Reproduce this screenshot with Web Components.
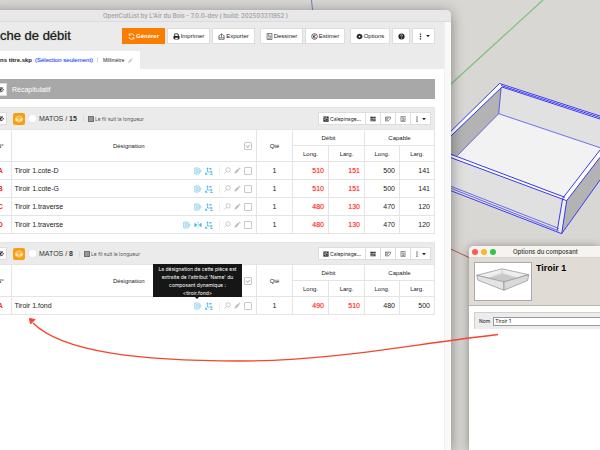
<!DOCTYPE html>
<html lang="fr">
<head>
<meta charset="utf-8">
<title>OpenCutList</title>
<style>
html, body { margin: 0; height: 100%; }
body { font-family: "Liberation Sans", Arial, sans-serif; color: #333; overflow: hidden; }
</style>
</head>
<body>
<ocl-desktop></ocl-desktop>
<script>
const ICONS = {
  refresh: '<g fill="none" stroke="currentColor" stroke-width="1.800"><path d="M2 9a6 6 0 0 0 11 2.500M14 7A6 6 0 0 0 3 4.500"/><path d="M2.500 1.500v3.700h3.700M13.500 14.500v-3.700H9.800"/></g>',
  print: '<path d="M4 1h7l2 2v4H3V1zM1 8q0-1 1-1h12q1 0 1 1v5h-2v2H3v-2H1z" fill="currentColor"/><path d="M5 3h5v1h1v3H5zM5 11h6v2.500H5z" fill="#fff"/>',
  exporter: '<g fill="none" stroke="currentColor" stroke-width="1.300"><path d="M5 6H2v8.500h12V6h-3M2 11h12M8 10V2M5 4.500L8 1.500l3 3"/></g>',
  doc: '<g fill="none" stroke="currentColor" stroke-width="1.300"><path d="M2.500 1h11v14h-11zM5 3.500h2M5 6h2M5 8.500h2M5 12h6M9 4v5h3"/></g>',
  money: '<g fill="none" stroke="currentColor" stroke-width="1.500"><circle cx="8" cy="8" r="6.500"/><path d="M11 5.500a3.300 3.300 0 1 0 0 5M4.500 7.300h4.500M4.500 9h4.500"/></g>',
  gear: '<path d="M8 1l1.500 2 2.500-.7.500 2.500L15 6l-1 2 1 2-2.500 1.200-.5 2.500-2.500-.7L8 15l-1.500-2-2.500.7-.5-2.500L1 10l1-2-1-2 2.500-1.200.5-2.500 2.500.7z" fill="currentColor"/><circle cx="8" cy="8" r="2" fill="#fff"/>',
  help: '<circle cx="8" cy="8" r="7" fill="currentColor"/><path d="M5.800 6.200a2.200 2.200 0 1 1 3.200 2q-1 .5-1 1.600M8 11v2" fill="none" stroke="#fff" stroke-width="1.700"/>',
  dots: '<path d="M6.500 1h3v3h-3zM6.500 6.500h3v3h-3zM6.500 12h3v3h-3z" fill="currentColor"/>',
  caret: '<path d="M3 5.500h10L8 11z" fill="currentColor"/>',
  pencil: '<path d="M1 15l1-4 7.500-7.500 3 3L5 14zM10.500 2.500L12 1l3 3-1.500 1.500z" fill="currentColor"/>',
  eye: '<path d="M1 9q3-5 7-5t7 5q-3 4-7 4T1 9z" fill="none" stroke="currentColor" stroke-width="2"/><circle cx="8" cy="8.500" r="2.500" fill="currentColor"/><path d="M3 14L13 2" stroke="currentColor" stroke-width="1.500"/>',
  board: '<path d="M8 2.500l6 2.500v5.500L8 14 2 10.500V5z" fill="#fbe3b0"/><path d="M2 5l6 3 6-3M8 8v6" fill="none" stroke="#f5a013" stroke-width="1.300"/><path d="M5 4.800l3-1.200 3 1.200-3 1.400z" fill="#f5a013"/>',
  grain: '<path d="M1 1h14v14H1z" fill="#aaa" stroke="#444" stroke-width="2"/><path d="M3 5h10M3 8h10M3 11h10" stroke="#666"/>',
  layout: '<path d="M1 1h14v14H1z" fill="currentColor"/><path d="M1 5h6v2M9 2v5h5M7 7v6M4 8v3M10 13l4-4" fill="none" stroke="#fff" stroke-width="1.400"/>',
  bars: '<path d="M1 2h14v4H1zM1 7.500h9V10H1zM1 11.500h14V14H1zM11 7.500h4V10h-4z" fill="currentColor"/><path d="M7 3.500h5M3 12.800h5" stroke="#fff"/>',
  label: '<g fill="none" stroke="currentColor" stroke-width="1.500"><path d="M9 13H1V3h14v4M3.500 6h6M3.500 9h4M9 13l6-6"/></g>',
  tag: '<g fill="none" stroke="#5bc0de" stroke-width="1.300"><path d="M1.500 2h8l5 6-5 6h-8zM3.500 5.500h4.500M3.500 8h6M3.500 10.500h4.500M9 4.500l2.500 3.500L9 11.500"/></g>',
  axes: '<path d="M5 2v8h8M5 10l-4 4" fill="none" stroke="#45b6e6" stroke-width="1.700" stroke-dasharray="3.500 1"/><path d="M2.500 4.500L5 .5l2.500 4zM11.500 7.500l4 2.500-4 2.500zM.5 10.500v5h5zM9 2h4v3H9zM11 13.500h4V16h-4z" fill="#45b6e6"/>',
  mirror: '<path d="M1 3l5.500 5L1 13zM15 3L9.500 8l5.500 5z" fill="#45b6e6"/><path d="M8 1v14" stroke="#45b6e6" stroke-width="1.300" stroke-dasharray="3 1"/>',
  search: '<g fill="none" stroke="currentColor" stroke-width="1.800"><circle cx="9.500" cy="6.500" r="5"/><path d="M6 10l-5 5"/></g>'
};

function define(name, css, html) {
  customElements.define(name, class extends HTMLElement {
    connectedCallback() {
      if (this.shadowRoot) return;
      const t = document.createElement('template');
      t.innerHTML = `<style>${css}</style>${typeof html === 'function' ? html(this) : html}`;
      this.attachShadow({ mode: 'open' }).append(t.content.cloneNode(true));
    }
  });
}

define('ocl-icon', `
  :host { display: inline-block; flex: none; width: 7px; height: 7px; }
  svg { display: block; width: 100%; height: 100%; }`,
  el => `<svg viewBox="0 0 16 16" aria-hidden="true">${ICONS[el.getAttribute('name')]}</svg>`);

define('ocl-button', `
  :host { display: block; flex: none; }
  button { box-sizing: border-box; width: 100%; height: 100%; margin: 0; padding: 0 4px 0 var(--lead, 4px); border: 1px solid #ddd; border-radius: 0;
    background: #fff; color: #222; font: inherit; display: flex; align-items: center; justify-content: center; gap: 1px; white-space: nowrap; }
  :host([primary]) button { background: #fb7d00; border-color: #fb7d00; color: #fff; font-weight: bold; }`,
  el => `<button type="button" aria-label="${el.getAttribute('label') || el.textContent.trim()}"><slot></slot></button>`);

define('ocl-toolbar', `
  :host { display: flex; align-items: center; justify-content: space-between; padding: 6px 9px 0 12px; }
  h1 { margin: 0; font-size: 13px; line-height: 16px; font-weight: normal; color: #222; text-shadow: 0 0 1px #666; white-space: nowrap; }
  .groups, .group { display: flex; }
  .groups { gap: 5px; font-size: 6px; }
  .group { gap: 2px; }
  ocl-button { height: 16px; width: 43px; }
  ocl-button.mid { width: 40px; }
  ocl-button.help { width: 18px; }
  ocl-button.more { width: 23px; }
  ocl-icon[name=caret] { width: 6px; height: 6px; }`,
  `<h1>che de débit</h1>
  <div class="groups">
    <div class="group">
      <ocl-button primary><ocl-icon name="refresh"></ocl-icon>Générer</ocl-button>
      <ocl-button><ocl-icon name="print"></ocl-icon>Imprimer</ocl-button>
      <ocl-button><ocl-icon name="exporter"></ocl-icon>Exporter</ocl-button>
    </div>
    <div class="group">
      <ocl-button><ocl-icon name="doc"></ocl-icon>Dessiner</ocl-button>
      <ocl-button class="mid"><ocl-icon name="money"></ocl-icon>Estimer</ocl-button>
    </div>
    <div class="group">
      <ocl-button class="mid"><ocl-icon name="gear"></ocl-icon>Options</ocl-button>
      <ocl-button class="help" label="Aide"><ocl-icon name="help"></ocl-icon></ocl-button>
      <ocl-button class="more" label="Plus"><ocl-icon name="dots"></ocl-icon><ocl-icon name="caret"></ocl-icon></ocl-button>
    </div>
  </div>`);

define('ocl-file-tab', `
  :host { display: flex; align-items: center; width: max-content; box-sizing: border-box; height: 18px; margin-top: 7px; padding: 0 7px 0 12px;
    background: #fff; font-size: 6px; color: #222; white-space: nowrap; }
  span { color: #2a4cf5; margin-left: 3px; text-shadow: 0 0 1px #9aaaff; }
  small { font-size: 5px; border-left: 1px solid #ddd; margin-left: 4px; padding-left: 5px; }
  button { border: 0; background: none; padding: 0; margin-left: 4px; color: #bbb; display: flex; }
  ocl-icon { width: 5px; height: 5px; }`,
  `<b>ns titre.skp</b><span>(Sélection seulement)</span><small>Millimètre</small>
  <button type="button" aria-label="Modifier"><ocl-icon name="pencil"></ocl-icon></button>`);

define('ocl-summary', `
  :host { display: flex; align-items: center; gap: 5px; height: 20px; background: #a8a8a8; color: #fff; font-size: 7px; }
  ocl-button { width: 19px; height: 13px; --lead: 9px; }`,
  `<ocl-button label="Afficher le récapitulatif"><ocl-icon name="eye"></ocl-icon></ocl-button>Récapitulatif`);

define('ocl-tooltip', `
  :host { position: absolute; z-index: 2; left: 50%; bottom: 100%; width: 89px; margin: 0 0 5px -45px; box-sizing: border-box; padding: 1px 0 0;
    background: #161616; color: #fff; font: 5px/8px Inter, sans-serif; text-align: center; white-space: nowrap; }
  i { position: absolute; left: 50%; top: 100%; margin-left: -2px; border: 2px solid transparent; border-top-color: #161616; border-bottom: 0; }`,
  `<slot></slot><i></i>`);

define('ocl-part-group', `
  :host { display: block; }
  header { display: flex; align-items: center; height: 22px; box-sizing: border-box; border: solid #e4e4e4; border-width: 1px 1px 0 0; background: #ebebeb; white-space: nowrap; font-size: 7px; }
  header > ocl-button { width: 19px; height: 13px; margin-right: 6px; --lead: 9px; }
  .mat { width: 12px; height: 12px; border-radius: 2px; background: #f5a013; display: flex; align-items: center; justify-content: center; }
  .mat ocl-icon { width: 10px; height: 10px; }
  .dot { width: 7px; height: 7px; border-radius: 50%; background: #fff; margin: 0 3px 0 4px; }
  .grain { display: flex; align-items: center; gap: 1px; margin-left: 6px; padding-left: 4px; border-left: 1px solid #dadada; font: 5px Inter, sans-serif; color: #555; }
  .grain ocl-icon { width: 6px; height: 6px; }
  .tools { display: flex; margin-left: auto; margin-right: 3px; font: 5px Inter, sans-serif; }
  .tools ocl-button { width: 16px; height: 13px; margin-left: -1px; }
  .tools .wide { width: 48px; }
  .tools .more { width: 21px; }
  .tools ocl-icon { width: 6px; height: 6px; }
  table { width: 100%; table-layout: fixed; border-collapse: collapse; background: #fff; font-size: 7px; line-height: 8px; }
  col.n { width: 23px; } col.q { width: 36px; } col.c { width: 35px; }
  th, td { border: 1px solid #e4e4e4; padding: 0; }
  tr > :first-child { border-left: 0; }
  thead tr:first-child > :first-child, .no { padding-left: 2px; }
  th { font-weight: normal; font-size: 6px; color: #222; }
  thead tr { height: 16px; }
  tbody tr { height: 18px; }
  .name { padding: 0 4px 0 3px; }
  .name > div { display: flex; align-items: center; justify-content: flex-end; position: relative; }
  .name .t { margin-right: auto; }
  th.name > div { justify-content: center; padding-right: 9px; }
  th.name input { position: absolute; right: 0; }
  .no { color: #f82a22; font-weight: bold; text-align: center; }
  .qty { text-align: center; }
  td { color: #222; }
  .num { text-align: right; padding-right: 4px; }
  .red { color: #fb2a22; text-shadow: 0 0 1px #f99; }
  .ic { position: relative; display: flex; margin-left: 3px; }
  .ic ocl-icon { width: 8px; height: 8px; }
  .act { display: flex; align-items: center; gap: 3px; margin-left: 6px; padding-left: 4px; border-left: 1px solid #eee; color: #bbb; }
  .act button { border: 0; padding: 0; background: none; color: inherit; display: flex; }
  input { appearance: none; box-sizing: border-box; width: 8px; height: 8px; margin: 0; border: 1px solid #c8c8c8; border-radius: 1px; background: #fff; }
  input:checked::before { content: ""; display: block; box-sizing: border-box; width: 4px; height: 3px; margin: 1px; border: solid #bbb; border-width: 0 0 1px 1px; transform: rotate(-45deg); }`,
  el => {
    const rows = JSON.parse(el.getAttribute('parts'));
    const icon = n => `<span class="ic"><ocl-icon name="${n}"></ocl-icon></span>`;
    const tip = el.hasAttribute('tip');
    return `
    <header>
      <ocl-button label="Masquer"><ocl-icon name="eye"></ocl-icon></ocl-button>
      <span class="mat"><ocl-icon name="board"></ocl-icon></span><span class="dot"></span>
      <span>MATOS / <b>${el.getAttribute('count')}</b></span>
      <span class="grain"><ocl-icon name="grain"></ocl-icon>Le fil suit la longueur</span>
      <div class="tools">
        <ocl-button class="wide"><ocl-icon name="layout"></ocl-icon>Calepinage...</ocl-button>
        <ocl-button label="Débit linéaire"><ocl-icon name="bars"></ocl-icon></ocl-button>
        <ocl-button label="Étiquettes"><ocl-icon name="label"></ocl-icon></ocl-button>
        <ocl-button label="Dessin"><ocl-icon name="doc"></ocl-icon></ocl-button>
        <ocl-button class="more" label="Plus"><ocl-icon name="dots"></ocl-icon><ocl-icon name="caret"></ocl-icon></ocl-button>
      </div>
    </header>
    <table>
      <colgroup><col class="n"><col><col class="q"><col class="q"><col class="q"><col class="c"><col class="c"></colgroup>
      <thead>
        <tr><th rowspan="2">N°</th>
          <th rowspan="2" class="name"><div>Désignation<input type="checkbox" checked aria-label="Tout sélectionner"></div></th>
          <th rowspan="2">Qté</th><th colspan="2">Débit</th><th colspan="2">Capable</th></tr>
        <tr><th>Long.</th><th>Larg.</th><th>Long.</th><th>Larg.</th></tr>
      </thead>
      <tbody>${rows.map(([no, name, a, b, c, d, m]) => `
        <tr><td class="no">${no}</td>
          <td class="name"><div><span class="t">${name}</span>
            <span class="ic"><ocl-icon name="tag"></ocl-icon>${tip ? '<ocl-tooltip>La désignation de cette pièce est<br>extraite de l\'attribut \'Name\' du<br>composant dynamique :<br>&lt;tiroir.fond&gt;</ocl-tooltip>' : ''}</span>
            ${m ? icon('mirror') : ''}${icon('axes')}
            <span class="act"><button type="button" aria-label="Voir"><ocl-icon name="search"></ocl-icon></button>
            <button type="button" aria-label="Modifier"><ocl-icon name="pencil"></ocl-icon></button>
            <input type="checkbox" aria-label="Sélectionner ${name}"></span></div></td>
          <td class="qty">1</td><td class="num red">${a}</td><td class="num red">${b}</td><td class="num">${c}</td><td class="num">${d}</td></tr>`).join('')}
      </tbody>
    </table>`;
  });

define('ocl-cutlist-window', `
  :host { display: flex; flex-direction: column; overflow: hidden; background: #fff; border-radius: 0 5px 0 0; box-shadow: 0 2px 14px #0006; }
  .title { height: 12px; flex: none; box-sizing: border-box; border-bottom: 1px solid #dcdcde; background: #e8e8eb; color: #a6a6a8; font: 600 6px/12px Inter, sans-serif; text-align: center; padding: 0 48px 0 0; white-space: nowrap; }
  .view { flex: 1; min-height: 0; display: flex; }
  .page { flex: 1; min-width: 0; }
  .track { width: 7px; background: #f9f9f9; border-left: 1px solid #f0f0f0; box-sizing: border-box; }
  .top { background: #ebebeb; }
  main { display: flex; flex-direction: column; gap: 8px; padding: 10px 9px 0 0; }`,
  `<div class="title">OpenCutList by L'Air du Bois - 7.0.0-dev ( build: 202503311952 )</div>
  <div class="view">
    <div class="page">
      <div class="top"><ocl-toolbar></ocl-toolbar><ocl-file-tab></ocl-file-tab></div>
      <main>
        <ocl-summary></ocl-summary>
        <ocl-part-group count="15" parts='[["A","Tiroir 1.cote-D",510,151,500,141],["B","Tiroir 1.cote-G",510,151,500,141],["C","Tiroir 1.traverse",480,130,470,120],["D","Tiroir 1.traverse",480,130,470,120,1]]'></ocl-part-group>
        <ocl-part-group count="8" tip parts='[["A","Tiroir 1.fond",490,510,480,500]]'></ocl-part-group>
      </main>
    </div>
    <div class="track"></div>
  </div>`);

define('ocl-component-window', `
  :host { display: block; overflow: hidden; background: #fff; border-radius: 5px 0 0 0; box-shadow: 0 1px 10px #0006; }
  .title { display: flex; align-items: center; gap: 3px; height: 12px; padding-left: 3px; background: #f6f3f0; border-bottom: 1px solid #d8d4ce; box-sizing: border-box; font: 500 6px Inter, sans-serif; color: #333; white-space: nowrap; }
  .title b { width: 6px; height: 6px; border-radius: 50%; }
  .title span { margin-left: 14px; }
  .head { display: flex; gap: 4px; height: 48px; box-sizing: border-box; padding: 4px 5px; background: #e0dcd5; border-bottom: 1px solid #b8b4ae; }
  .head svg { width: 58px; height: 39px; box-sizing: border-box; background: #fff; border: 1px solid #aaa; }
  h2 { margin: 0; font-size: 9px; line-height: 12px; color: #000; white-space: nowrap; }
  label { display: flex; align-items: center; gap: 3px; height: 17px; margin: 6px 0 0 5px; padding-left: 4px; box-sizing: border-box; background: #ececec; border: solid #d0d0d0; border-width: 1px 0 0 1px; font: 5px Inter, sans-serif; color: #111; }
  input { flex: 1; min-width: 0; height: 9px; box-sizing: border-box; border: 1px solid #999; border-right: 0; padding: 0 1px; margin: 0; border-radius: 0; background: #fff; font: inherit; color: #111; }`,
  `<div class="title"><b style="background:#fc5b57"></b><b style="background:#fdb52c"></b><b style="background:#2bc840"></b><span>Options du composant</span></div>
  <div class="head">
    <svg viewBox="0 0 172 114" aria-hidden="true"><g stroke="#888" stroke-width="2" stroke-linejoin="round"><path d="M5 38L83 18l82 18-76 22z" fill="#eee"/><path d="M43 47l42-13 42 13-38 11z" fill="#c8c8c8" stroke="none"/><path d="M83 18v14L43 46M83 32l45 13" fill="none" stroke="#bbb"/><path d="M5 38l84 20v26L9 53z" fill="#e4e4e4"/><path d="M165 36L89 58v26l73-30z" fill="#d9d9d9"/></g></svg>
    <h2>Tiroir 1</h2>
  </div>
  <label>Nom<input type="text" value="Tiroir 1"></label>`);

define('ocl-desktop', `
  :host { display: block; position: relative; height: 100%; overflow: hidden; background: #d8d7d3; }
  svg { position: absolute; top: 0; right: 0; width: 600px; height: 450px; }
  .arrow { z-index: 3; pointer-events: none; }
  ocl-cutlist-window { position: absolute; left: -12px; right: 149px; top: 10px; bottom: 0; }
  ocl-component-window { position: absolute; width: 131px; right: 0; top: 246px; bottom: 0; }`,
  `<svg viewBox="0 0 600 450" aria-hidden="true">
    <path d="M311.500 0l1 10" stroke="#7b78c8"/>
    <path d="M543 0L451 84" stroke="#7cc27a" stroke-width="1.200"/>
    <path d="M440 244l30 14" stroke="#c8524c"/>
    <path d="M499.500 83.500L600 116v64l-38 54-122-47v-45z" fill="#fff"/>
    <path d="M502 87l98 32v29l-101-34z" fill="#e1e1e1"/>
    <path d="M502 87l-62 59v8l17 2 42-42z" fill="#b3b3b3"/>
    <path d="M498.700 113.700L600 147.700v2.300l-37 48-106-42z" fill="#f2f2f3"/>
    <path d="M440 153.500l126.700 47.200-5 33L440 186.500z" fill="#e0e0e0"/>
    <path d="M563 198l4 3-5 33-5-4z" fill="#eee"/>
    <path d="M566.700 200.700l33.300-43.400V180l-38.300 53.700z" fill="#b3b3b3"/>
    <g fill="none" stroke="#3a38ee">
      <path d="M440 142l59.500-58.500L600 116M440 146.500L502 87l98 32M501 85.500l99 32"/>
      <path d="M501 88l-2.300 25.700-41.400 42M498.700 113.700l101.300 34" stroke-width=".7"/>
      <path d="M440 150.200l125 47.100M440 153.600l126.700 47.100M600 150l-37.300 48.300M600 157.300l-33.300 43.400-5 33M600 180l-38.300 53.700L440 186.500M562.700 198.300L557.300 230"/>
      <path d="M440 184l119 47M440 182l119 46.500" stroke-width=".7"/>
    </g>
  </svg>
  <ocl-cutlist-window></ocl-cutlist-window>
  <ocl-component-window></ocl-component-window>
  <svg class="arrow" viewBox="0 0 600 450" aria-hidden="true">
    <path d="M498 334.500C400 346 330 361 240 361C140 361 62 352 33 323" fill="none" stroke="#f4452f" stroke-width="1.300"/>
    <path d="M29.500 318.500l5.500 1-4.500 4.500z" fill="#f4452f" stroke="#f4452f"/>
  </svg>`);
</script>
</body>
</html>
